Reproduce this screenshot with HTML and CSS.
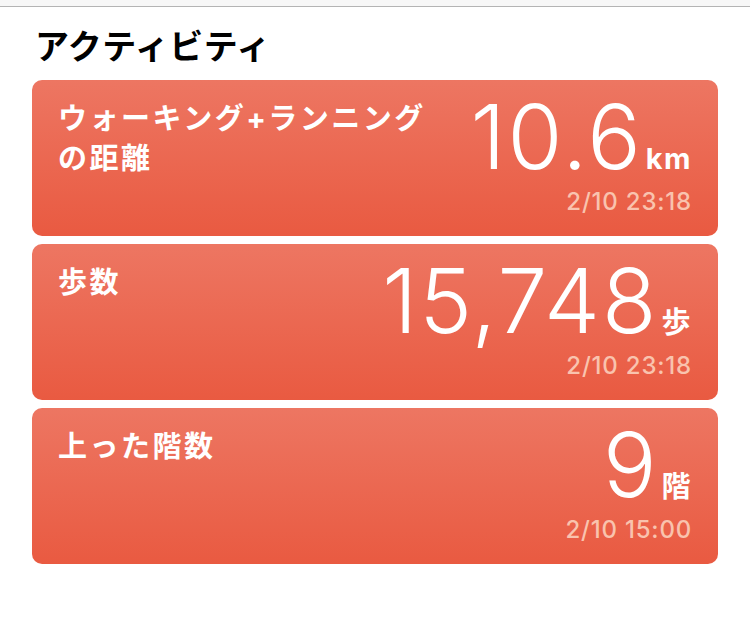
FILE: index.html
```html
<!DOCTYPE html>
<html lang="ja">
<head>
    <meta charset="UTF-8">
    <meta name="viewport" content="width=device-width, initial-scale=1.0">
    <title>アクティビティ</title>
    <link rel="stylesheet" href="styles.css">
</head>
<body>
    <div class="topbar"></div>

    <h1 class="title">アクティビティ</h1>

    <!-- カード一覧 -->
    <div class="cards">
        <div class="card">
            <div class="label">ウォーキング+ランニング<br>の距離</div>
            <div class="data">
                <div class="value"><span class="num">10.6</span><span class="unit">km</span></div>
                <div class="date">2/10 23:18</div>
            </div>
        </div>
        <div class="card">
            <div class="label">歩数</div>
            <div class="data">
                <div class="value"><span class="num">15,748</span><span class="unit">歩</span></div>
                <div class="date">2/10 23:18</div>
            </div>
        </div>
        <div class="card">
            <div class="label">上った階数</div>
            <div class="data">
                <div class="value"><span class="num">9</span><span class="unit">階</span></div>
                <div class="date">2/10 15:00</div>
            </div>
        </div>
    </div>
</body>
</html>
```

FILE: styles.css
```css
body {
    margin: 0;
    background: #fff;
    font-family: Inter, "Noto Sans CJK JP", sans-serif;
}
.topbar {
    height: 6px;
    background: #f7f7f7;
    border-bottom: 1px solid #b4b4b4;
}
.title {
    margin: 20px 0 0 35px;
    font-size: 34px;
    font-weight: 700;
    line-height: 40px;
    letter-spacing: 0.5px;
    color: #000;
}
.cards {
    display: flex;
    flex-direction: column;
    gap: 8px;
    margin: 13px 32px 0 32px;
}
.card {
    display: flex;
    justify-content: space-between;
    height: 156px;
    box-sizing: border-box;
    padding: 19px 26px 0 26px;
    border-radius: 10px;
    background: linear-gradient(#ed7662, #e95a41);
    color: #fff;
}
.label {
    font-size: 29px;
    font-weight: 700;
    line-height: 40px;
    letter-spacing: 2.5px;
    white-space: nowrap;
}
.data {
    display: flex;
    flex-direction: column;
    align-items: flex-end;
}
.value {
    display: flex;
    align-items: baseline;
    margin-top: -2px;
}
.num {
    font-size: 89px;
    font-weight: 300;
    line-height: 80px;
    letter-spacing: 2px;
}
.unit {
    margin-left: 3px;
    font-size: 29px;
    font-weight: 700;
    line-height: 1;
    letter-spacing: 1.5px;
}
.date {
    margin-top: 13px;
    font-size: 24px;
    font-weight: 500;
    line-height: 24px;
    letter-spacing: 0.8px;
    color: #f9c3ae;
}
```
